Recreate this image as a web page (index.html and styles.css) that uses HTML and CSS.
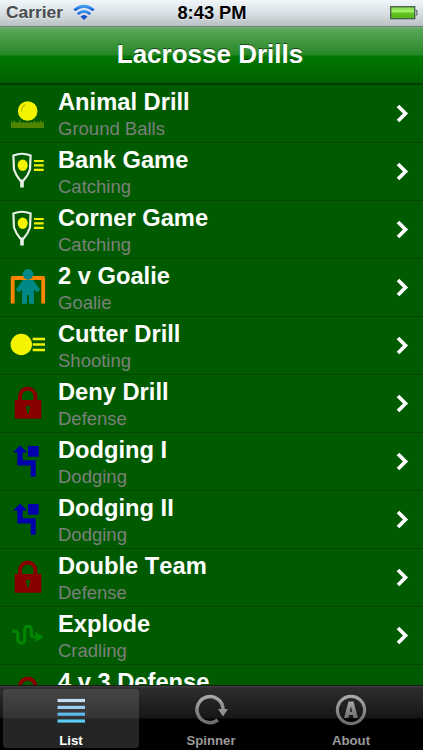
FILE: index.html
```
<!DOCTYPE html>
<html lang="en">
    <head>
        <meta charset="utf-8">
        <title>Lacrosse Drills</title>
        <link rel="stylesheet" href="styles.css">
    </head>
    <body>
      <header class="status-bar">
        <div class="signal">
          <span class="carrier">Carrier</span>
          <svg width="22" height="17" viewBox="0 0 22 17">
            <defs>
              <linearGradient id="wifi-blue" x1="0" y1="0" x2="0" y2="1">
                <stop offset="0" stop-color="#3f9af0"/>
                <stop offset="1" stop-color="#1b5fd6"/>
              </linearGradient>
            </defs>
            <g fill="none" stroke="url(#wifi-blue)" stroke-width="2.7">
              <path d="M1.3 6.3Q11-1.8 20.7 6.3"/>
              <path d="M4.7 10Q11 4.6 17.3 10"/>
            </g>
            <path d="M7.5 12.5Q11 9.5 14.5 12.500L11 16z" fill="#1450cc"/>
          </svg>
        </div>
        <span class="clock">8:43 PM</span>
        <svg class="battery" width="28" height="14" viewBox="0 0 28 14">
          <defs>
            <linearGradient id="battery-green" x1="0" y1="0" x2="0" y2="1">
              <stop offset="0" stop-color="#7fd744"/>
              <stop offset="0.4" stop-color="#a5ef6c"/>
              <stop offset="0.55" stop-color="#60c31f"/>
              <stop offset="1" stop-color="#55b51c"/>
            </linearGradient>
          </defs>
          <rect x=".7" y=".7" width="24" height="12" fill="url(#battery-green)" stroke="#48604a" stroke-width="1.3"/>
          <path d="M25.5 4.500h1.500v4.500h-1.500" fill="#b9c6b9" stroke="#5a605a"/>
        </svg>
      </header>

      <div class="nav-bar">
        <h1 class="nav-title">Lacrosse Drills</h1>
      </div>

      <ul class="drill-list" id="drillList"></ul>

      <nav class="tab-bar">
        <div class="tab tab-selected">
          <svg width="40" height="37" viewBox="0 0 40 37">
            <g stroke-width="3.2">
              <path d="M6.500 11.500h27.500" stroke="#c5ddf4"/>
              <path d="M6.500 18.400h27.500" stroke="#9acdf0"/>
              <path d="M6.500 25.200h27.500" stroke="#5db8ec"/>
              <path d="M6.500 32h27.500" stroke="#59ccf5"/>
            </g>
          </svg>
          <span class="tab-label">List</span>
        </div>
        <div class="tab">
          <svg width="40" height="37" viewBox="0 0 40 37">
            <defs>
              <linearGradient id="tab-gray" x1="0" y1="0" x2="0" y2="1">
                <stop offset="0" stop-color="#a8a8a8"/>
                <stop offset="1" stop-color="#6c6c6c"/>
              </linearGradient>
            </defs>
            <path d="M26.800 31A13 13 0 1 1 32 20" fill="none" stroke="url(#tab-gray)" stroke-width="3.5"/>
            <path d="M27 20h10l-5 7.500z" fill="#939393"/>
          </svg>
          <span class="tab-label">Spinner</span>
        </div>
        <div class="tab">
          <svg width="40" height="37" viewBox="0 0 40 37">
            <circle cx="20" cy="21" r="13.600" fill="none" stroke="url(#tab-gray)" stroke-width="3.2"/>
            <path d="M13 29L17.500 12.500h5L27 29h-4.500l-.7-3h-3.600l-.7 3zM18.800 22.700h2.400L20 17z" fill="url(#tab-gray)" fill-rule="evenodd"/>
          </svg>
          <span class="tab-label">About</span>
        </div>
      </nav>
      <script src="drills.js"></script>
    </body>
</html>
```

FILE: styles.css
```
body {
    margin: 0px;
    height: 750px;
    display: flex;
    flex-direction: column;
    overflow: hidden;
    background-color: #000000;
    font-family: "Liberation Sans", Arial, sans-serif;
    font-kerning: none;
}
.status-bar {
    box-sizing: border-box;
    height: 27px;
    flex: none;
    display: grid;
    grid-template-columns: 1fr auto 1fr;
    align-items: center;
    padding: 0px 5px 1px 6px;
    border-bottom: 1px solid #737b7d;
    background: linear-gradient(#f0f6f9, #dce3e8 45%, #b9c0c4);
    text-shadow: 0px 1px 0px #ffffff88;
}
.signal {
    display: flex;
    align-items: center;
    gap: 10px;
}
.carrier {
    font-size: 17.4px;
    font-weight: bold;
    color: #484b4e;
}
.clock {
    font-size: 18.3px;
    font-weight: bold;
    color: #000000;
}
.battery {
    justify-self: end;
}
.nav-bar {
    box-sizing: border-box;
    height: 58px;
    flex: none;
    display: flex;
    align-items: center;
    justify-content: center;
    padding: 0px 3px 2px 0px;
    border-bottom: 2px solid #003c00;
    background: linear-gradient(#6cb56c, #5ba75b 2px, #258725 28px, #007800 29px, #005f00);
}
.nav-title {
    margin: 0px;
    font-size: 26px;
    line-height: 30px;
    color: #ffffff;
    text-shadow: 0px -1px 0px #00000088;
}
.drill-list {
    flex: 1;
    min-height: 0px;
    overflow: hidden;
    margin: 0px;
    padding: 0px;
    list-style: none;
    background-color: #005b00;
}
.drill {
    box-sizing: border-box;
    height: 58px;
    display: flex;
    align-items: center;
    padding: 0px 14px 0px 6px;
    border-bottom: 1px solid #004600;
}
.drill-icon {
    width: 44px;
    height: 44px;
    flex: none;
    margin-bottom: 1px;
}
.drill-text {
    flex: 1;
    padding: 4px 0px 0px 8px;
}
.drill-name {
    font-size: 23.7px;
    line-height: 27px;
    font-weight: bold;
    color: #ffffff;
}
.drill-type {
    font-size: 18.5px;
    line-height: 26px;
    min-height: 26px;
    color: #7b807b;
}
.tab-bar {
    box-sizing: border-box;
    height: 65px;
    flex: none;
    display: grid;
    grid-template-columns: repeat(3, 136px);
    gap: 4px;
    padding: 3px 0px 3px 3px;
    border-top: 1px solid #1c1c1c;
    background: linear-gradient(#434343, #2d2d2d 2px, #161616 32px, #000000 33px);
}
.tab {
    display: flex;
    flex-direction: column;
    align-items: center;
    border-radius: 4px;
}
.tab-selected {
    background: linear-gradient(#464646, #343434 29px, #252525 30px, #252525);
}
.tab-label {
    font-size: 13.2px;
    line-height: 15px;
    margin-top: 7px;
    font-weight: bold;
    color: #999999;
}
.tab-selected .tab-label {
    color: #ffffff;
}
```

FILE: drills.js
```
const ICONS = {
  "Ground Balls": `<circle cx="21.700" cy="20" r="9.800" fill="#f4f400"/>
    <path d="M15.500 20.500q0-5 4-7" fill="none" stroke="#bcbc00" stroke-width="1.3"/>
    <path d="M5 37v-7l2 2 1-3 2 3 1-1 1 1 2-3 1 3 2-1 2 1 2-1 2 1 2-1 2 1 2-3 1 3 2-2 1 2 2-3 1 3 2-2v7z" fill="#4f8500"/>`,
  "Catching": `<path d="M7.400 6.500Q16 3 24.600 6.500L24 20.500Q22 26.500 17.500 31.500h-3.200Q10 26.500 8 20.500z" fill="none" stroke="#e9f1e9" stroke-width="2.2"/>
    <path d="M16 31v7.500" stroke="#e9f1e9" stroke-width="3.6"/>
    <ellipse cx="16.700" cy="16.200" rx="5" ry="5.700" fill="#f4f400"/>
    <path d="M28 12h9.700M28 16.400h9.700M28 20.800h9.700" stroke="#f4f400" stroke-width="2.2"/>`,
  "Goalie": `<path d="M6.700 38.500V13h30.500v25.500" fill="none" stroke="#ff8500" stroke-width="3.8" stroke-linejoin="round"/>
    <circle cx="22" cy="9.300" r="5.400" fill="#008888"/>
    <path d="M17 15h10l7 9.500-3 3-3-3V38.700h-5V30h-2v8.700h-5V24.500l-3 3-3-3z" fill="#008888"/>`,
  "Shooting": `<circle cx="15.300" cy="21.500" r="10.700" fill="#f4f400"/>
    <path d="M26.700 16h12.300M26.700 21.500h12.300M26.700 27h12.300" stroke="#f4f400" stroke-width="2.4"/>`,
  "Defense": `<path d="M14 20.500v-5.300a7.700 7.700 0 0 1 15.400 0v5.300" fill="none" stroke="#880000" stroke-width="3.9"/>
    <path d="M8.700 19h26.600v18.700H8.700z" fill="#880000"/>
    <path d="M22 32.300v-6" stroke="#005b00" stroke-width="2.2"/>
    <circle cx="22" cy="26.700" r="2.100" fill="#005b00"/>`,
  "Dodging": `<path d="M7 13.500l7.200-6.900 7 6.900h-4.500v7.800h13v16.500h-5V26.500H11.300v-13z" fill="#0000ac"/>
    <path d="M22 7h10.700v10.700H22z" fill="#0000ac"/>`,
  "Cradling": `<path d="M6.300 18.200h2.500q2.900 0 2.900 3v5.500a3.500 3.500 0 0 0 7 0V16.500a3.300 3.300 0 0 1 6.600 0V21q0 3 3 3h2" fill="none" stroke="#008600" stroke-width="3.1"/>
    <path d="M29.500 19l8.200 5-8.200 5z" fill="#008600"/>`
};

const drills = [
  ["Animal Drill", "Ground Balls"],
  ["Bank Game", "Catching"],
  ["Corner Game", "Catching"],
  ["2 v Goalie", "Goalie"],
  ["Cutter Drill", "Shooting"],
  ["Deny Drill", "Defense"],
  ["Dodging I", "Dodging"],
  ["Dodging II", "Dodging"],
  ["Double Team", "Defense"],
  ["Explode", "Cradling"],
  ["4 v 3 Defense", "Defense", true]
];

document.getElementById("drillList").innerHTML = drills.map(([name, type, covered]) => `
  <li class="drill">
    <svg class="drill-icon" viewBox="0 0 44 44">${ICONS[type]}</svg>
    <div class="drill-text">
      <div class="drill-name">${name}</div>
      <div class="drill-type">${covered ? "" : type}</div>
    </div>
    ${covered ? "" : `<svg width="13" height="19" viewBox="0 0 13 19">
      <path d="M2 2l7.500 7.500L2 17" fill="none" stroke="#ffffff" stroke-width="3.7"/>
    </svg>`}
  </li>`).join("");
```
